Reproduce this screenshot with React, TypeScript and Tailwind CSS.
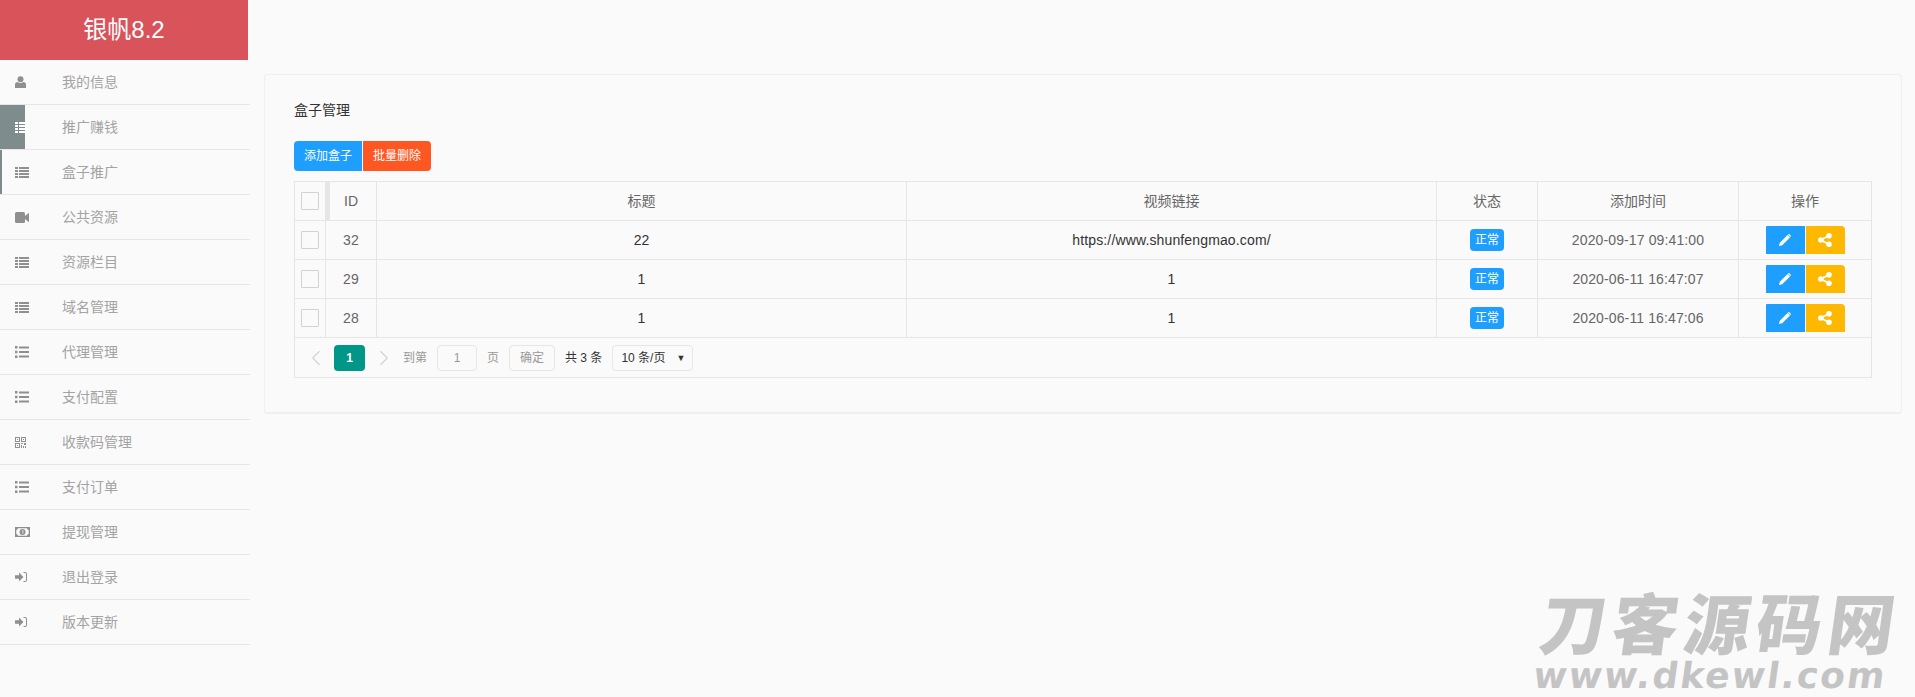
import { ChevronLeft, ChevronRight } from "lucide-react";

// icons are redrawn by hand, the icon packs have a heavier version of these
const UserIcon = () => (
  <svg width="11" height="12" viewBox="0 0 11 12" fill="currentColor">
    <circle cx="5.5" cy="3.2" r="3" />
    <path d="M0 12V8.6C0 7 1.2 6 2.6 6c.8.7 1.8 1 2.9 1s2.1-.3 2.9-1C9.8 6 11 7 11 8.6V12z" />
  </svg>
);
const ListIcon = () => (
  <svg width="14" height="11" viewBox="0 0 14 11" fill="currentColor">
    <path d="M0 0h3v2H0zM4 0h10v2H4zM0 3h3v2H0zM4 3h10v2H4zM0 6h3v2H0zM4 6h10v2H4zM0 9h3v2H0zM4 9h10v2H4z" />
  </svg>
);
const ListUlIcon = () => (
  <svg width="14" height="12" viewBox="0 0 14 12" fill="currentColor">
    <path d="M0 0h2.5v2.5H0zM4 .5h10v2H4zM0 4.75h2.5v2.5H0zM4 5h10v2H4zM0 9.5h2.5V12H0zM4 9.5h10v2H4z" />
  </svg>
);
const VideoIcon = () => (
  <svg width="14" height="11" viewBox="0 0 14 11" fill="currentColor">
    <rect x="0" y="0" width="10" height="11" rx="1.5" />
    <path d="M10 4 14 .8v9.4L10 7z" />
  </svg>
);
const QrIcon = () => (
  <svg width="11" height="11" viewBox="0 0 11 11" fill="currentColor">
    <path fillRule="evenodd" d="M0 0h5v5H0zM1 1v3h3V1zM6 0h5v5H6zM7 1v3h3V1zM0 6h5v5H0zM1 7v3h3V7z" />
    <path d="M2 2h1v1H2zM8 2h1v1H8zM2 8h1v1H2zM6 6h2v1H6zM9 6h2v2H9zM6 8h1v3H6zM8 9h1v2H8zM10 9h1v2h-1z" />
  </svg>
);
const MoneyIcon = () => (
  <svg width="15" height="10" viewBox="0 0 15 10" fill="currentColor">
    <path fillRule="evenodd" d="M0 0h15v10H0zM3 1.3a2 2 0 0 1-1.7 1.7v4A2 2 0 0 1 3 8.7h9A2 2 0 0 1 13.7 7V3A2 2 0 0 1 12 1.3z" />
    <path fillRule="evenodd" d="M7.5 2a3 3 0 1 1 0 6 3 3 0 0 1 0-6zM7 3.5V4h.5v2.5h.8V3.5z" />
  </svg>
);
const SignInIcon = () => (
  <svg width="12" height="10" viewBox="0 0 12 10" fill="currentColor">
    <path d="M0 3.2h4V.4L8.4 5 4 9.6V6.8H0z" />
    <path d="M8.5 0H10c1.2 0 2 .9 2 2v6c0 1.1-.8 2-2 2H8.5V9H10c.6 0 1-.4 1-1V2c0-.6-.4-1-1-1H8.5z" />
  </svg>
);
const PencilIcon = () => (
  <svg width="12" height="12" viewBox="0 0 12 12" fill="currentColor">
    <path d="M0 12l.8-3.2L8.6 1l2.4 2.4-7.8 7.8z" />
    <path d="M9.3.4c.4-.4 1-.4 1.3 0l1 1c.4.4.4.9 0 1.3l-.3.3L8.9.7z" />
  </svg>
);
const ShareIcon = () => (
  <svg width="14" height="14" viewBox="0 0 14 14" fill="currentColor">
    <circle cx="11" cy="2.8" r="2.8" />
    <circle cx="2.8" cy="7" r="2.8" />
    <circle cx="11" cy="11.2" r="2.8" />
    <path d="M2.2 6.2 10.4 2l.9 1.6L3.1 7.8zM3.1 6.2l8.2 4.2-.9 1.6-8.2-4.2z" />
  </svg>
);

const menu = [
  { label: "我的信息", Icon: UserIcon },
  { label: "推广赚钱", Icon: ListIcon, hover: true },
  { label: "盒子推广", Icon: ListIcon, active: true },
  { label: "公共资源", Icon: VideoIcon },
  { label: "资源栏目", Icon: ListIcon },
  { label: "域名管理", Icon: ListIcon },
  { label: "代理管理", Icon: ListUlIcon },
  { label: "支付配置", Icon: ListUlIcon },
  { label: "收款码管理", Icon: QrIcon },
  { label: "支付订单", Icon: ListUlIcon },
  { label: "提现管理", Icon: MoneyIcon },
  { label: "退出登录", Icon: SignInIcon },
  { label: "版本更新", Icon: SignInIcon },
];

const rows = [
  { id: 32, title: "22", url: "https://www.shunfengmao.com/", time: "2020-09-17 09:41:00" },
  { id: 29, title: "1", url: "1", time: "2020-06-11 16:47:07" },
  { id: 28, title: "1", url: "1", time: "2020-06-11 16:47:06" },
];

const gridCols = "grid grid-cols-[31px_51px_530px_530px_101px_201px_132px]";
const cell = "flex items-center justify-center border-r border-[#e6e6e6] h-[38px] text-sm";

function Checkbox() {
  return <span className="block w-[18px] h-[18px] border border-[#d2d2d2] rounded-[1px] bg-[#fafafa]" />;
}

export default function App() {
  return (
    <div className="relative flex min-h-[697px] overflow-hidden bg-[#fafafa] font-['Liberation_Sans','Noto_Sans_CJK_SC',sans-serif]">
      {/* Sidebar */}
      <aside className="w-[250px] shrink-0">
        <div className="w-[248px] h-[60px] bg-[#d9535a] flex items-center justify-center text-white text-2xl">
          银帆8.2
        </div>
        {menu.map(({ label, Icon, hover, active }) => (
          <div key={label} className="relative h-[45px] border-b border-[#e6e6e6] flex items-center text-sm text-[#a3a3a3]">
            {hover && <span className="absolute left-0 top-0 bottom-0 w-[25px] bg-[#7f8c8d]" />}
            {active && <span className="absolute left-0 top-0 bottom-0 w-[2px] bg-[#7f8c8d]" />}
            <span className={`relative w-[62px] pl-[15px] ${hover ? "text-white" : "text-[#8f8f8f]"}`}>
              <Icon />
            </span>
            <span>{label}</span>
          </div>
        ))}
      </aside>

      {/* Content */}
      <main className="flex-1 pt-[74px] pl-[14px] pr-[13px]">
        <div className="h-[340px] border border-b-2 border-[#eeeef3] rounded pt-6 pl-[29px]">
          <h2 className="text-sm leading-[22px] text-[#333]">盒子管理</h2>
          <div className="flex gap-px mt-5">
            <button className="w-[68px] h-[30px] bg-[#1e9fff] text-white text-xs rounded-l-sm">添加盒子</button>
            <button className="w-[68px] h-[30px] bg-[#ff5722] text-white text-xs rounded-r-sm">批量删除</button>
          </div>

          <div className="mt-[10px] w-[1578px] border border-[#e6e6e6]">
            <div className={`${gridCols} border-b border-[#e6e6e6] text-[#666]`}>
              <div className={cell}><Checkbox /></div>
              <div className={`${cell} relative`}>
                <span className="absolute left-0 top-0 bottom-0 w-1 bg-[#e6e6e6]" />
                ID
              </div>
              <div className={cell}>标题</div>
              <div className={cell}>视频链接</div>
              <div className={cell}>状态</div>
              <div className={cell}>添加时间</div>
              <div className={`${cell} border-r-0`}>操作</div>
            </div>

            {rows.map((row) => (
              <div key={row.id} className={`${gridCols} border-b border-[#e6e6e6] text-[#666]`}>
                <div className={cell}><Checkbox /></div>
                <div className={`${cell} tracking-[0.2px]`}>{row.id}</div>
                <div className={`${cell} text-[#333]`}>{row.title}</div>
                <div className={`${cell} text-[#333] tracking-[0.14px]`}>{row.url}</div>
                <div className={cell}>
                  <span className="w-[34px] h-[22px] flex items-center justify-center bg-[#1e9fff] text-white text-xs rounded-sm">正常</span>
                </div>
                <div className={`${cell} tracking-[0.12px]`}>{row.time}</div>
                <div className={`${cell} border-r-0 gap-px`}>
                  <span className="w-[39px] h-7 flex items-center justify-center bg-[#1e9fff] text-white rounded-tl-[1px]"><PencilIcon /></span>
                  <span className="w-[39px] h-7 flex items-center justify-center bg-[#ffb800] text-white rounded-tr-sm"><ShareIcon /></span>
                </div>
              </div>
            ))}

            {/* Pagination */}
            <div className="h-[39px] pt-px flex items-center text-xs text-[#999] pl-2">
              <ChevronLeft size={26} strokeWidth={1} className="text-[#d2d2d2]" />
              <span className="ml-[5px] w-[31px] h-[26px] flex items-center justify-center bg-[#009688] text-white rounded-sm font-bold">1</span>
              <ChevronRight size={26} strokeWidth={1} className="ml-[6px] text-[#d2d2d2]" />
              <span className="ml-[6px]">到第</span>
              <span className="ml-[10px] w-10 h-[26px] flex items-center justify-center border border-[#e6e6e6] rounded-sm">1</span>
              <span className="ml-[10px]">页</span>
              <span className="ml-[10px] w-[46px] h-[26px] flex items-center justify-center border border-[#e6e6e6] rounded-sm">确定</span>
              <span className="ml-[10px] text-[#333]">共 3 条</span>
              <span className="ml-[10px] w-[81px] h-[26px] flex items-center justify-between pl-2 pr-[7px] border border-[#e6e6e6] rounded-sm text-[#333]">
                10 条/页
                <span className="text-[9px]">▼</span>
              </span>
            </div>
          </div>
        </div>
      </main>

      {/* Watermark */}
      <div className="absolute left-[1538px] top-[595px] w-[365px] -skew-x-[8deg] text-[#c4c4c4] font-black font-['DejaVu_Sans','Noto_Sans_CJK_SC',sans-serif]">
        <div className="text-[66px] leading-[63px] tracking-[6px] whitespace-nowrap">刀客源码网</div>
        <div className="text-[36px] leading-[36px] tracking-[2px] whitespace-nowrap">www.dkewl.com</div>
      </div>
    </div>
  );
}
